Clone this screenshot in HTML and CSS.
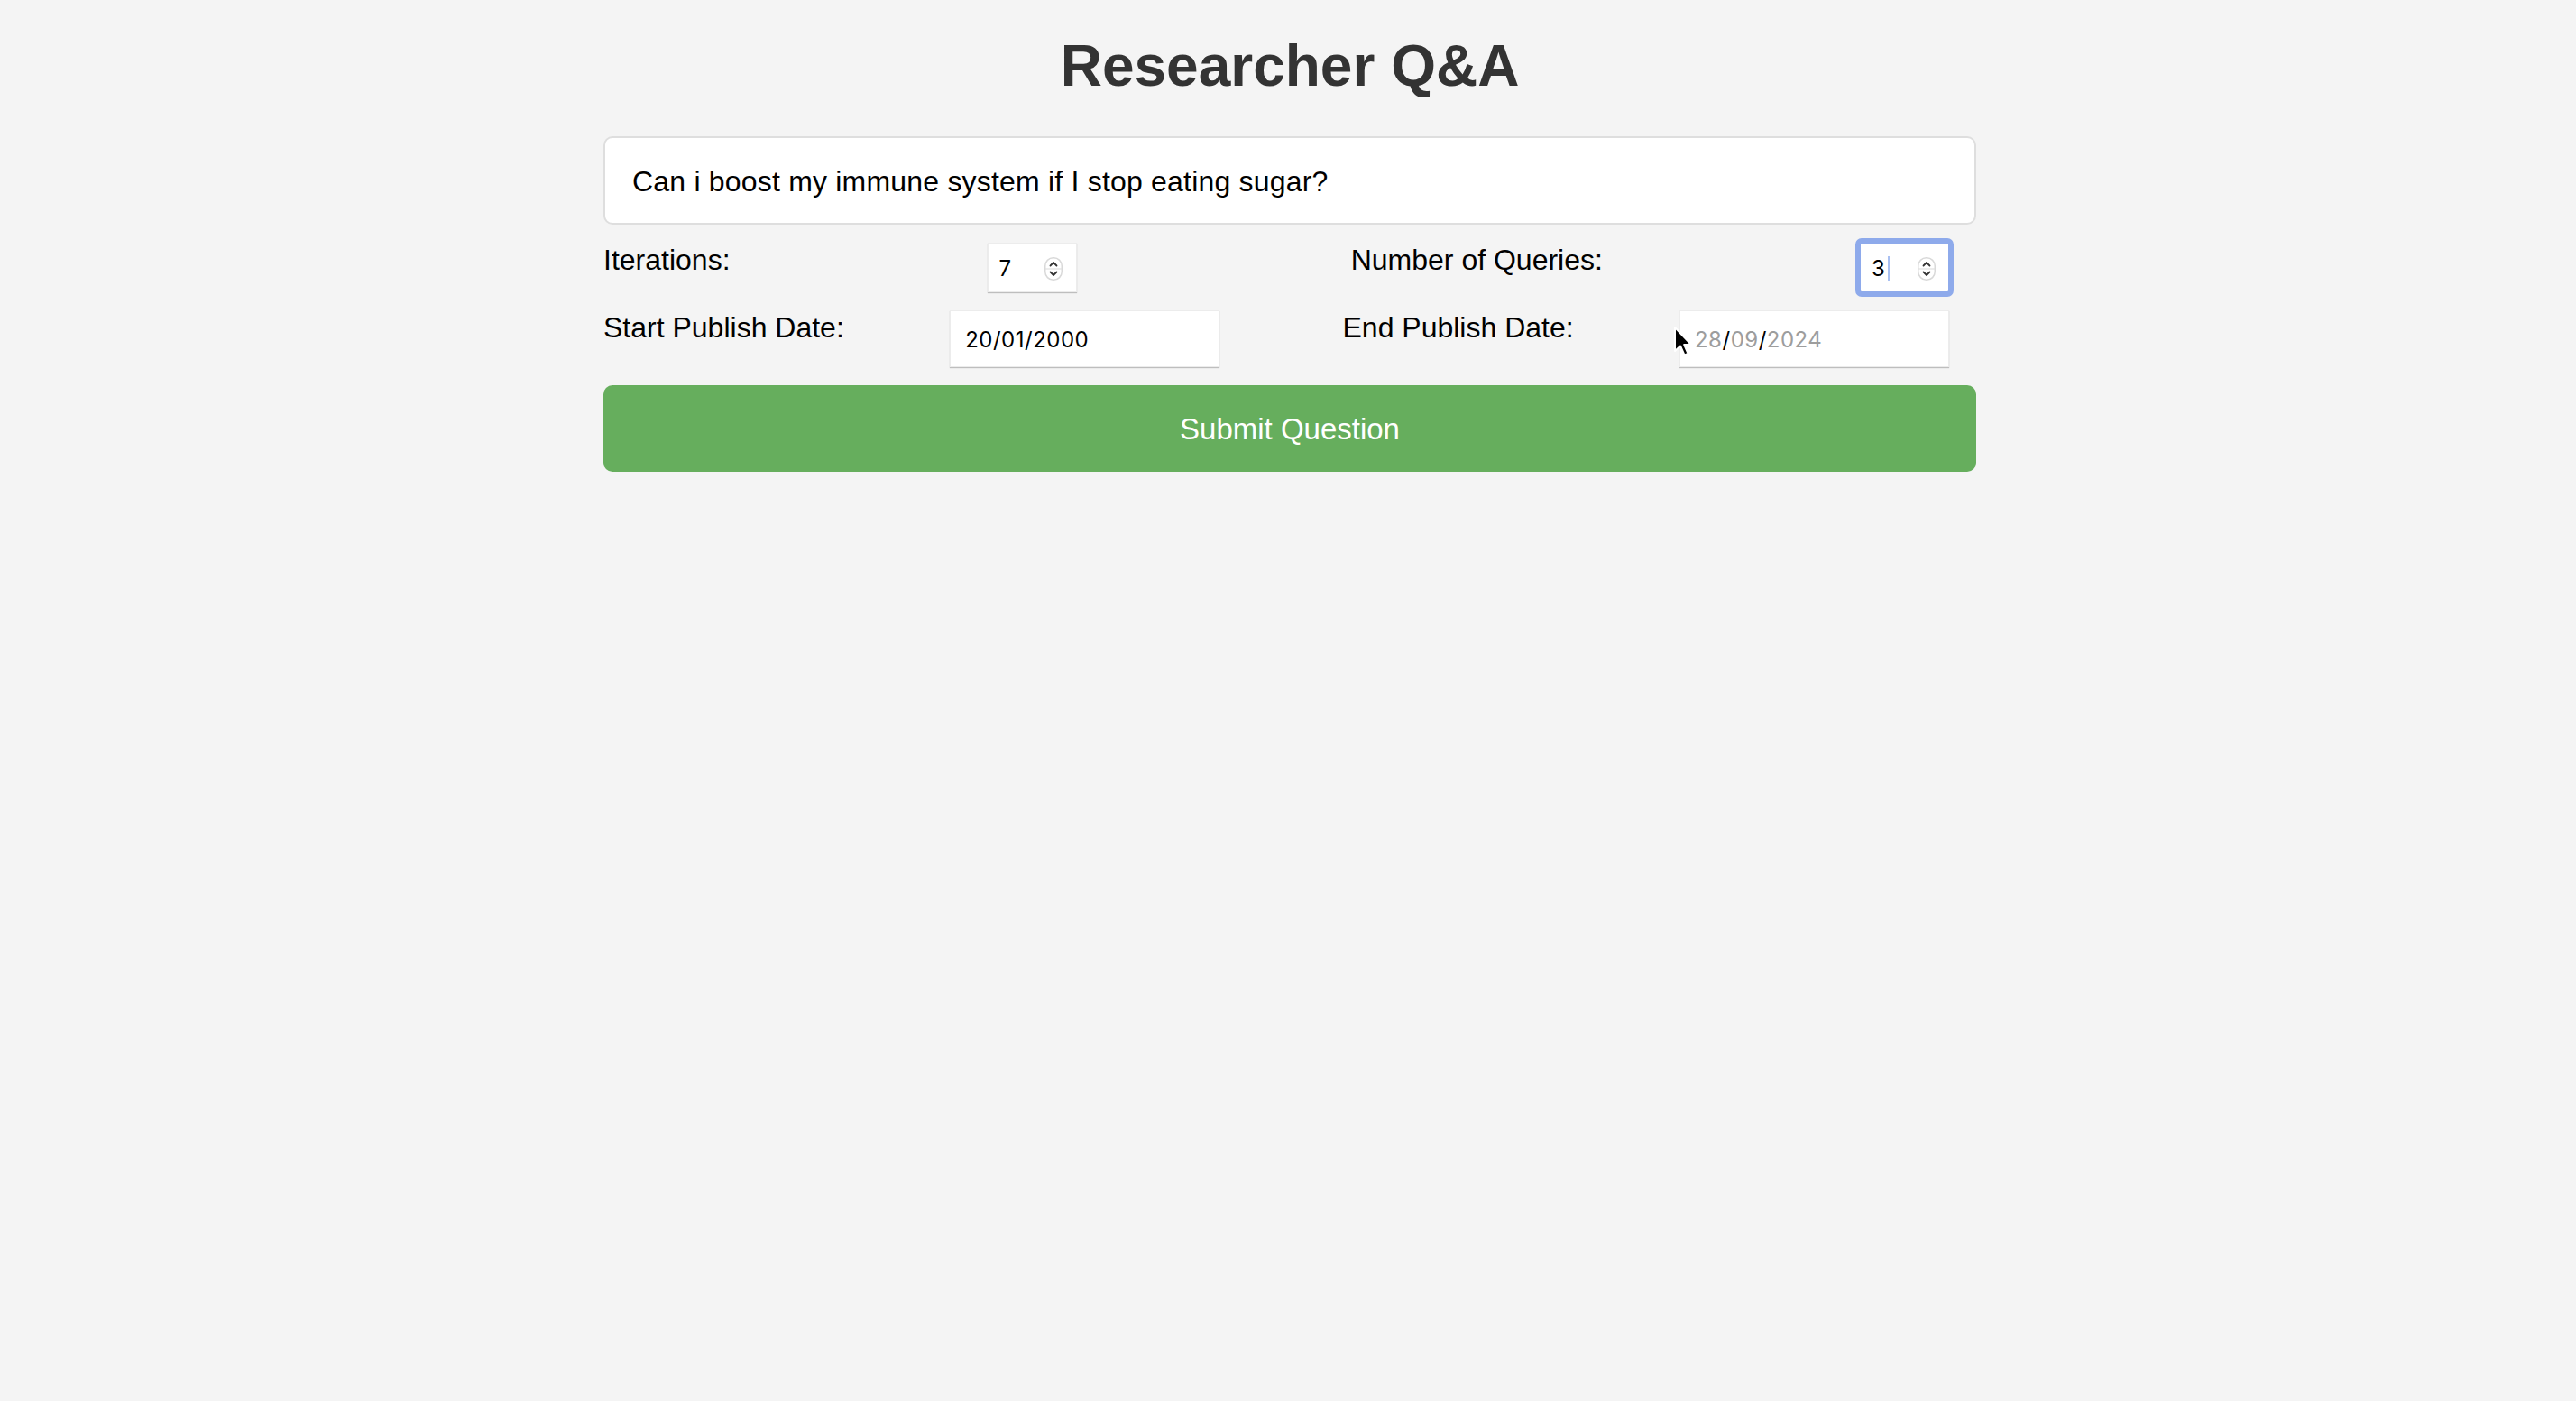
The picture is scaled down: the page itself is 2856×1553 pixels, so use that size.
FILE: index.html
```html
<!DOCTYPE html>
<html lang="en">
<head>
<meta charset="utf-8">
<title>Researcher Q&amp;A</title>
<link rel="stylesheet" href="styles.css">
</head>
<body>
<div class="container">
  <h1 class="title">Researcher Q&amp;A</h1>
  <input class="question" type="text" value="Can i boost my immune system if I stop eating sugar?">

  <div class="row row-1">
    <label class="label">Iterations:</label>
    <div class="field num-field">
      <span class="val">7</span>
      <svg class="spinner" width="20" height="26" viewBox="0 0 20 26"><rect x="0.75" y="0.75" width="18.5" height="24.5" rx="9" fill="#fff" stroke="#d9d9d9" stroke-width="1.5"/><line x1="1" y1="13" x2="19" y2="13" stroke="#e0e0e0" stroke-width="1.2"/><path d="M6.5 9.5 L10 6 L13.5 9.5" fill="none" stroke="#333" stroke-width="1.8" stroke-linecap="round" stroke-linejoin="round"/><path d="M6.5 16.5 L10 20 L13.5 16.5" fill="none" stroke="#333" stroke-width="1.8" stroke-linecap="round" stroke-linejoin="round"/></svg>
    </div>
    <label class="label">Number of Queries:</label>
    <div class="field num-field focused">
      <span class="val">3</span><span class="caret"></span>
      <svg class="spinner" width="20" height="26" viewBox="0 0 20 26"><rect x="0.75" y="0.75" width="18.5" height="24.5" rx="9" fill="#fff" stroke="#d9d9d9" stroke-width="1.5"/><line x1="1" y1="13" x2="19" y2="13" stroke="#e0e0e0" stroke-width="1.2"/><path d="M6.5 9.5 L10 6 L13.5 9.5" fill="none" stroke="#333" stroke-width="1.8" stroke-linecap="round" stroke-linejoin="round"/><path d="M6.5 16.5 L10 20 L13.5 16.5" fill="none" stroke="#333" stroke-width="1.8" stroke-linecap="round" stroke-linejoin="round"/></svg>
    </div>
  </div>

  <div class="row row-2">
    <label class="label">Start Publish Date:</label>
    <div class="field date-field"><span class="d">20</span><span class="sep">/</span><span class="d">01</span><span class="sep">/</span><span class="d">2000</span></div>
    <label class="label">End Publish Date:</label>
    <div class="field date-field empty"><span class="d">28</span><span class="sep">/</span><span class="d">09</span><span class="sep">/</span><span class="d">2024</span></div>
  </div>

  <button class="submit" type="button">Submit Question</button>
</div>

<svg class="pointer" width="22" height="36" viewBox="0 0 22 36"><path d="M2 2 L2 28 L8 22.5 L12.5 32.5 L16.5 30.8 L12.2 21 L20 21 Z" fill="#000" stroke="#fff" stroke-width="2" stroke-linejoin="round"/></svg>
</body>
</html>
```
FILE: styles.css
```css
* { box-sizing: border-box; }

html, body {
  margin: 0;
  padding: 0;
  background: #f4f4f4;
}

body {
  padding-left: 4px;
  font-family: "Liberation Sans", Arial, Helvetica, sans-serif;
  color: #000;
}

.container {
  width: 1522px;
  margin: 0 auto;
  padding-top: 36px;
}

.title {
  margin: 0 0 41px;
  font-size: 64px;
  line-height: 74px;
  font-weight: bold;
  color: #333;
  text-align: center;
}

.question {
  display: block;
  width: 100%;
  height: 98px;
  margin: 0 0 20px;
  padding: 2px 30px 0;
  border: 2px solid #dedede;
  border-radius: 10px;
  background: #fff;
  font-family: "Liberation Sans", Arial, Helvetica, sans-serif;
  font-size: 32px;
  letter-spacing: 0.2px;
  color: #000;
  outline: none;
}

.row {
  display: flex;
  justify-content: space-between;
  align-items: flex-start;
  padding-right: 11px;
  margin-bottom: 20px;
}

.label {
  font-size: 32px;
  line-height: 37px;
  padding-top: 1px;
  color: #000;
}

.field {
  position: relative;
  display: flex;
  align-items: center;
  margin-right: 19px;
  background: #fff;
  border: 1px solid #ececec;
  box-shadow: 0 1px 1px rgba(0, 0, 0, 0.22);
  font-family: Inter, "Liberation Sans", sans-serif;
  font-size: 24px;
  color: #000;
}

.num-field {
  width: 99px;
  height: 55px;
  padding-left: 12px;
  padding-top: 2px;
}

.num-field .val {
  width: 50px;
  line-height: 30px;
}

.num-field.focused {
  outline: 6px solid #8eaaeb;
  outline-offset: -1px;
  border-radius: 2px;
}

.num-field.focused .val {
  width: auto;
}

.caret {
  display: inline-block;
  width: 2px;
  height: 28px;
  margin-left: 3px;
  margin-right: 31px;
  background: #a9c0f2;
}

.spinner {
  display: block;
  flex: none;
}

.date-field {
  width: 299px;
  height: 63px;
  padding-left: 16px;
  padding-top: 2px;
  letter-spacing: 0.5px;
}

.date-field.empty .d {
  color: #9d9d9d;
}

.date-field.empty .sep {
  color: #000;
}

.submit {
  display: block;
  width: 100%;
  height: 96px;
  border: none;
  border-radius: 10px;
  background: #66ae5d;
  color: #fff;
  font-family: "Liberation Sans", Arial, Helvetica, sans-serif;
  font-size: 33px;
  padding-top: 3px;
  cursor: pointer;
}

.pointer {
  position: absolute;
  left: 1855px;
  top: 361px;
}
```
